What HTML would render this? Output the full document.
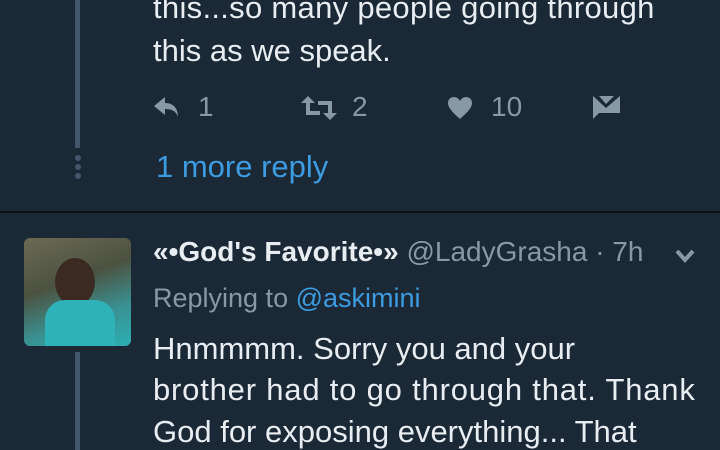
<!DOCTYPE html><html><head><style>
body{margin:0;width:720px;height:450px;overflow:hidden;background:#1b2836;font-family:"Liberation Sans",sans-serif;position:relative}
.t{position:absolute;color:#e8edf1;font-size:31px;white-space:nowrap}
.g{color:#8899a6}.b{color:#3d9be0}
.line{position:absolute;left:75px;width:5px;background:#44566a}
.dot{position:absolute;left:75px;width:6px;height:6px;border-radius:3px;background:#44566a}
</style></head><body>
<div class="line" style="top:0;height:148px"></div>
<div class="dot" style="top:155px"></div><div class="dot" style="top:164px"></div><div class="dot" style="top:173px"></div>
<div class="t" style="left:153px;top:-10px;letter-spacing:0.3px">this...so many people going through</div>
<div class="t" style="left:153px;top:33px">this as we speak.</div>
<svg style="position:absolute;left:152px;top:95px" width="30" height="25" viewBox="0 0 30 25"><path d="M13 2 L2 11 L13 20 V14 C20 14 24 16 26 22 C26 13 21 8 13 8Z" fill="#8899a6"/></svg>
<div class="t g" style="left:198px;top:91px;font-size:28px">1</div>
<svg style="position:absolute;left:300px;top:96px" width="38" height="24" viewBox="0 0 38 24"><path d="M8 0 L1 7 H6 V19 H20 V15 H10 V7 H15Z M30 24 L37 17 H32 V5 H18 V9 H28 V17 H23Z" fill="#8899a6"/></svg>
<div class="t g" style="left:352px;top:91px;font-size:28px">2</div>
<svg style="position:absolute;left:447px;top:96px" width="26" height="24" viewBox="0 0 26 24"><path d="M13 23 C4 15 1 11 1 7 C1 3 4 1 7 1 C10 1 12 3 13 5 C14 3 16 1 19 1 C22 1 25 3 25 7 C25 11 22 15 13 23Z" fill="#8899a6"/></svg>
<div class="t g" style="left:491px;top:91px;font-size:28px">10</div>
<svg style="position:absolute;left:593px;top:96px" width="27" height="24" viewBox="0 0 27 24"><path d="M0 0 L13 12 L27 0 V17 H6 L0 23Z M6 0 H21 L13 8Z" fill="#8899a6"/></svg>
<div class="t b" style="left:156px;top:149px">1 more reply</div>
<div style="position:absolute;left:0;top:211px;width:720px;height:2px;background:#0c1117"></div>
<div style="position:absolute;left:24px;top:238px;width:107px;height:108px;border-radius:6px;background:linear-gradient(160deg,#6b6a55 0%,#4c5240 40%,#3a8f90 70%,#2bb0b4 100%)"></div>
<div style="position:absolute;left:55px;top:258px;width:40px;height:48px;border-radius:50%;background:#3a2a22"></div>
<div style="position:absolute;left:45px;top:300px;width:70px;height:46px;border-radius:20px 20px 0 0;background:#30b3b8"></div>
<div class="t" style="left:153px;top:236px;font-weight:bold;font-size:28px">«•God's Favorite•» <span class="g" style="font-weight:normal">@LadyGrasha · 7h</span></div>
<svg style="position:absolute;left:675px;top:249px" width="20" height="14" viewBox="0 0 20 14"><path d="M2 2 L10 11 L18 2" stroke="#8899a6" stroke-width="4" fill="none"/></svg>
<div class="t g" style="left:153px;top:283px;font-size:27px">Replying to <span class="b">@askimini</span></div>
<div class="line" style="top:352px;height:98px"></div>
<div class="t" style="left:153px;top:331px">Hnmmmm. Sorry you and your</div>
<div class="t" style="left:153px;top:372px;letter-spacing:0.8px">brother had to go through that. Thank</div>
<div class="t" style="left:153px;top:414px">God for exposing everything... That</div>
</body></html>
